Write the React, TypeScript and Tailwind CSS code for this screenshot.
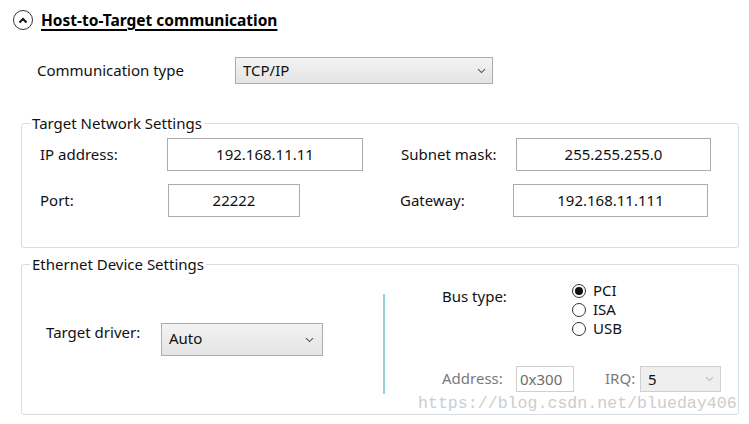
import React from "react";

const Chevron = ({ color = "#555" }: { color?: string }) => (
  <svg width="9" height="6" viewBox="0 0 9 6" fill="none">
    <path d="M1 1.2 L4.5 4.6 L8 1.2" stroke={color} strokeWidth="1.1" />
  </svg>
);

const Radio = ({ checked, label }: { checked?: boolean; label: string }) => (
  <div className="flex items-center h-[19px]">
    <div className="w-[14px] h-[14px] rounded-full border border-[#333] bg-white flex items-center justify-center">
      {checked && <div className="w-[8px] h-[8px] rounded-full bg-[#111]" />}
    </div>
    <span className="ml-[7px] text-[15px] leading-[19px]">{label}</span>
  </div>
);

const TextBox = ({ value, className }: { value: string; className: string }) => (
  <div
    className={`border border-[#ababab] bg-white flex items-center justify-center text-[15px] ${className}`}
  >
    {value}
  </div>
);

export default function App() {
  return (
    <div
      className="relative w-[749px] h-[424px] bg-white overflow-hidden text-[#111]"
      style={{ fontFamily: '"Noto Sans", "Open Sans", sans-serif' }}
    >
      {/* Header */}
      <div className="flex items-center h-[20px] mt-[10px] ml-[13px]">
        <div className="w-[20px] h-[20px] rounded-full border-[1.5px] border-[#333] flex items-center justify-center">
          <svg width="10" height="7" viewBox="0 0 10 7" fill="none">
            <path d="M1.5 5.5 L5 2 L8.5 5.5" stroke="#111" strokeWidth="2" />
          </svg>
        </div>
        <span className="ml-[8px] text-[15.5px] font-bold underline underline-offset-[3px] decoration-[1.5px] leading-[20px] text-black">
          Host-to-Target communication
        </span>
      </div>

      {/* Communication type */}
      <div className="flex items-center h-[27px] mt-[27px] ml-[37px]">
        <div className="w-[198px] overflow-hidden whitespace-nowrap text-[15px]">
          <div className="w-[147px] overflow-hidden">Communication type</div>
        </div>
        <div className="w-[258px] h-[27px] border border-[#acacac] bg-gradient-to-b from-[#f3f3f3] to-[#e4e4e4] flex items-center justify-between pl-[7px] pr-[6px] text-[15px]">
          <span>TCP/IP</span>
          <Chevron />
        </div>
      </div>

      {/* Target Network Settings */}
      <fieldset className="ml-[21px] w-[718px] mt-[29px] border border-[#d6dee5] rounded-[3px] pb-[30px]">
        <legend className="ml-[8px] px-[2px] text-[15px] leading-[20px]">Target Network Settings</legend>
        <div className="flex items-center h-[33px] mt-[5px] pl-[18px]">
          <span className="w-[127px] text-[15px]">IP address:</span>
          <TextBox value="192.168.11.11" className="w-[196px] h-[33px]" />
          <span className="ml-[38px] w-[115px] text-[15px]">Subnet mask:</span>
          <TextBox value="255.255.255.0" className="w-[195px] h-[33px]" />
        </div>
        <div className="flex items-center h-[33px] mt-[13px] pl-[18px]">
          <span className="w-[128px] text-[15px]">Port:</span>
          <TextBox value="22222" className="w-[132px] h-[33px]" />
          <span className="ml-[100px] w-[113px] text-[15px]">Gateway:</span>
          <TextBox value="192.168.11.111" className="w-[195px] h-[33px]" />
        </div>
      </fieldset>

      {/* Ethernet Device Settings */}
      <fieldset className="ml-[21px] w-[718px] mt-[6px] border border-[#d6dee5] rounded-[3px] h-[161px]">
        <legend className="ml-[8px] px-[2px] text-[15px] leading-[20px]">Ethernet Device Settings</legend>
        <div className="flex h-[139px]">
          <div className="w-[361px] flex items-start pt-[49px] pl-[24px]">
            <span className="w-[115px] text-[15px] leading-[20px] mt-[-1px]">Target driver:</span>
            <div className="w-[162px] h-[33px] border border-[#acacac] bg-gradient-to-b from-[#f3f3f3] to-[#e4e4e4] flex items-center justify-between pl-[7px] pr-[8px] text-[15px]">
              <span className="mt-[-2px]">Auto</span>
              <Chevron />
            </div>
          </div>
          <div className="w-[2px] h-[100px] mt-[20px] bg-[#92d1d7]" />
          <div className="flex flex-col pl-[57px] pt-[7px]">
            <div className="flex items-start">
              <span className="w-[130px] mt-[5px] text-[15px] leading-[20px]">Bus type:</span>
              <div className="flex flex-col">
                <Radio checked label="PCI" />
                <Radio label="ISA" />
                <Radio label="USB" />
              </div>
            </div>
            <div className="flex items-center h-[26px] mt-[28px] text-[#7a7a7a] text-[15px]">
              <span className="w-[74px] mt-[-2px]">Address:</span>
              <div className="w-[58px] h-[26px] border border-[#cfcfcf] bg-white flex items-center pl-[3px] text-[#6d6d6d]">
                0x300
              </div>
              <span className="ml-[31px] w-[35px] mt-[-2px]">IRQ:</span>
              <div className="w-[81px] h-[26px] border border-[#d0d0d0] bg-[#efefef] flex items-center justify-between pl-[7px] pr-[6px] text-[#111]">
                <span>5</span>
                <Chevron color="#bbb" />
              </div>
            </div>
          </div>
        </div>
      </fieldset>

      {/* Watermark */}
      <div
        className="absolute left-[418px] top-[394px] text-[16.6px] leading-[20px] text-[#cdcdcd] whitespace-nowrap pointer-events-none"
        style={{ fontFamily: '"Liberation Mono", monospace' }}
      >
        https://blog.csdn.net/blueday406
      </div>
    </div>
  );
}
